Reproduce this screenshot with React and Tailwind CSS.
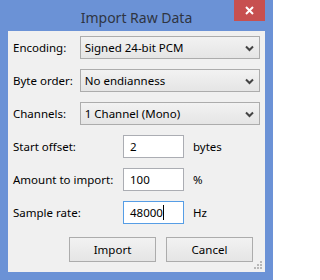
import { useState } from "react";

const font = { fontFamily: '"Noto Sans", "Open Sans", sans-serif' };

function Combo({ value }) {
  return (
    <div className="flex items-center justify-between w-[181px] h-[23px] border border-[#acacac] bg-gradient-to-b from-[#f2f2f2] to-[#e5e5e5] pl-[4px] pr-[5px]">
      <span className="text-[11.5px] text-black leading-none">{value}</span>
      <svg width="9" height="7" viewBox="0 0 9 7" className="mt-[2px]">
        <path d="M1 1.5 L4.5 5 L8 1.5" fill="none" stroke="#444" strokeWidth="2" />
      </svg>
    </div>
  );
}

function Field({ value, focused, unit }) {
  return (
    <div className="flex items-center">
      <div
        className={
          "flex items-center w-[61px] h-[23px] bg-white pl-[6px] border " +
          (focused ? "border-[#569de5]" : "border-[#abadb3]")
        }
      >
        <span className="text-[11.5px] text-black leading-none">{value}</span>
        {focused && <span className="w-px h-[15px] bg-black" />}
      </div>
      <span className="ml-[9px] text-[11.5px] text-black">{unit}</span>
    </div>
  );
}

export default function App() {
  const [rows] = useState([
    ["Encoding:", "Signed 24-bit PCM"],
    ["Byte order:", "No endianness"],
    ["Channels:", "1 Channel (Mono)"],
  ]);

  return (
    <div style={font} className="w-[273px] h-[280px] bg-[#6b92d6] flex flex-col">
      <div className="relative h-[31px] flex items-center justify-center">
        <span className="text-[14px] text-[#2f3542] pt-[3px]">Import Raw Data</span>
        <div className="absolute top-0 right-[8px] w-[31px] h-[21px] bg-[#c75050] flex items-center justify-center">
          <svg width="9" height="9" viewBox="0 0 9 9">
            <path d="M1 1 L8 8 M8 1 L1 8" stroke="white" strokeWidth="2" />
          </svg>
        </div>
      </div>
      <div className="relative mx-[8px] h-[241px] bg-[#f0f0f0] pt-[5px] pl-[5px] pr-[5px] flex flex-col gap-[10px]">
        {rows.map(([label, value]) => (
          <div key={label} className="flex items-center">
            <span className="w-[67px] text-[11.5px] text-black">{label}</span>
            <Combo value={value} />
          </div>
        ))}
        <div className="flex items-center">
          <span className="w-[110px] text-[11.5px] text-black">Start offset:</span>
          <Field value="2" unit="bytes" />
        </div>
        <div className="flex items-center">
          <span className="w-[110px] text-[11.5px] text-black">Amount to import:</span>
          <Field value="100" unit="%" />
        </div>
        <div className="flex items-center">
          <span className="w-[110px] text-[11.5px] text-black">Sample rate:</span>
          <Field value="48000" focused unit="Hz" />
        </div>
        <div className="flex justify-end gap-[10px] mt-[3px] pr-[7px]">
          <button className="w-[87px] h-[25px] border border-[#acacac] bg-gradient-to-b from-[#f2f2f2] to-[#e5e5e5] text-[11.5px] text-black">
            Import
          </button>
          <button className="w-[87px] h-[25px] border border-[#acacac] bg-gradient-to-b from-[#f2f2f2] to-[#e5e5e5] text-[11.5px] text-black">
            Cancel
          </button>
        </div>
        <svg width="9" height="9" viewBox="0 0 9 9" className="absolute right-[2px] bottom-[2px]">
          <rect x="6" y="0" width="2" height="2" fill="#b8b8b8" />
          <rect x="3" y="3" width="2" height="2" fill="#b8b8b8" />
          <rect x="6" y="3" width="2" height="2" fill="#b8b8b8" />
          <rect x="0" y="6" width="2" height="2" fill="#b8b8b8" />
          <rect x="3" y="6" width="2" height="2" fill="#b8b8b8" />
          <rect x="6" y="6" width="2" height="2" fill="#b8b8b8" />
        </svg>
      </div>
    </div>
  );
}
